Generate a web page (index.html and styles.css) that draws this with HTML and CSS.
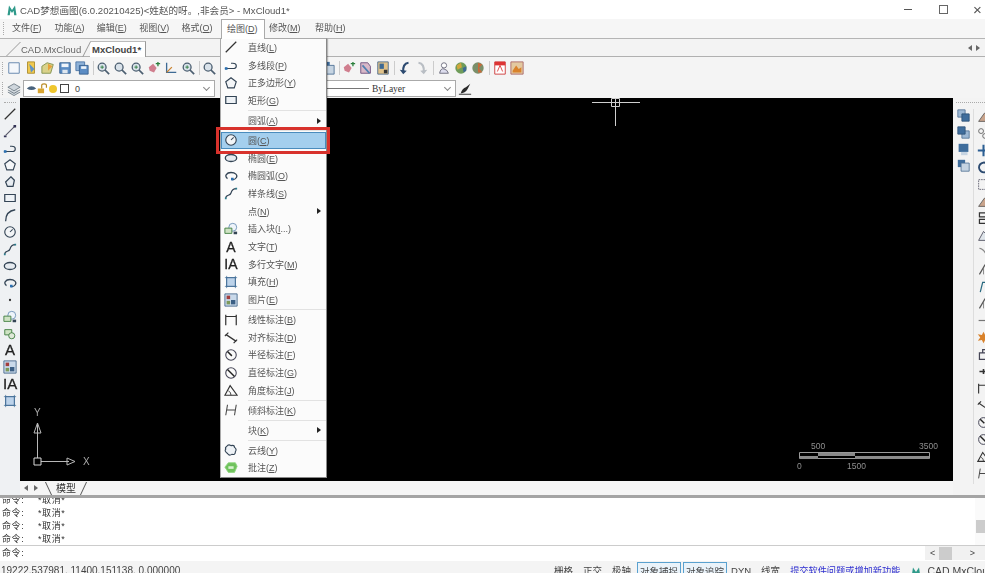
FILE: index.html
```html
<!DOCTYPE html>
<html lang="zh">
<head>
    <meta charset="UTF-8">
    <title>CAD梦想画图</title>
    <link rel="stylesheet" href="styles.css">
</head>
<body>
<svg class="defs" width="0" height="0">
    <symbol id="i-line" viewBox="0 0 16 16"><path d="M2 14L14 2" stroke="#333" stroke-width="1.5"/></symbol>
    <symbol id="i-xline" viewBox="0 0 16 16"><path d="M3 13L13 3" stroke="#556" stroke-width="1.2"/><path d="M1 13h3v2H1zM12 1h3v3h-3z" fill="#335"/></symbol>
    <symbol id="i-pline" viewBox="0 0 16 16"><path d="M1 12h9q4 0 4-3t-4-3H8" fill="none" stroke="#345" stroke-width="1.4"/><path d="M1 10.5h3v3H1z" fill="#2a6fb0"/></symbol>
    <symbol id="i-polygon" viewBox="0 0 16 16"><path d="M8 2l6 4.500-2.300 7H4.300L2 6.500z" fill="#f4f6f8" stroke="#345" stroke-width="1.3"/></symbol>
    <symbol id="i-poly2" viewBox="0 0 16 16"><path d="M9 2l4 4-1.500 7H5L3 8z" fill="#e8edf2" stroke="#345" stroke-width="1.4"/></symbol>
    <symbol id="i-rect" viewBox="0 0 16 16"><path d="M2 4h12v8H2z" fill="#eef2f6" stroke="#345" stroke-width="1.4"/></symbol>
    <symbol id="i-arc" viewBox="0 0 16 16"><path d="M3 15C3 8 7 3 14 2" fill="none" stroke="#345" stroke-width="1.5"/></symbol>
    <symbol id="i-circle" viewBox="0 0 16 16"><circle cx="8" cy="8" r="6" fill="#f3f5f7" stroke="#345" stroke-width="1.3"/><path d="M8 8l3-3" stroke="#345" stroke-width="1.2"/></symbol>
    <symbol id="i-spline" viewBox="0 0 16 16"><path d="M2 14C2 9 7 12 8 8s4-5 6-5" fill="none" stroke="#345" stroke-width="1.3"/><path d="M1 13h2v2H1zM13 2h2v2h-2z" fill="#2a7f8f"/></symbol>
    <symbol id="i-ellipse" viewBox="0 0 16 16"><ellipse cx="8" cy="8" rx="6.5" ry="4" fill="#e6ebf0" stroke="#345" stroke-width="1.5"/></symbol>
    <symbol id="i-elliparc" viewBox="0 0 16 16"><path d="M4 11C0 8 3 4 8 4s8 3 6 6-4 2-5 2" fill="none" stroke="#345" stroke-width="1.5"/><path d="M8 10h3v3H8z" fill="#2a6fb0"/></symbol>
    <symbol id="i-point" viewBox="0 0 16 16"><circle cx="8" cy="8" r="1.3" fill="#333"/></symbol>
    <symbol id="i-insert" viewBox="0 0 16 16"><circle cx="10" cy="6" r="4.5" fill="#eef4fa" stroke="#6a8fb5"/><path d="M1 7h8v6H1z" fill="#cfe3c4" stroke="#3c7a3c"/><path d="M11 11h4v3h-4z" fill="#345"/></symbol>
    <symbol id="i-block" viewBox="0 0 16 16"><path d="M2 3h8v6H2z" fill="#cfe3c4" stroke="#3c7a3c"/><circle cx="10" cy="10" r="3.5" fill="#dfe8d8" stroke="#3c7a3c"/></symbol>
    <symbol id="i-hatch" viewBox="0 0 16 16"><path d="M3 3h10v10H3z" fill="#bcd3ea" stroke="#3d6a94"/><path d="M1 3h14M1 13h14M3 1v14M13 1v14" stroke="#3d6a94" stroke-width=".8"/></symbol>
    <symbol id="i-image" viewBox="0 0 16 16"><path d="M1 1h14v14H1z" fill="#c9d9ea" stroke="#46688c"/><path d="M3 3h4v4H3z" fill="#a33d3d"/><path d="M8 8h5v5H8z" fill="#3b5f85"/><path d="M3 9h4v4H3z" fill="#7d9a5a"/></symbol>
    <symbol id="i-dimlin" viewBox="0 0 16 16"><path d="M2 2v12M14 2v12M2 4h12" fill="none" stroke="#333" stroke-width="1.4"/></symbol>
    <symbol id="i-dimali" viewBox="0 0 16 16"><path d="M2 5l12 8" stroke="#333" stroke-width="1.4"/><path d="M1 7l4-4M11 15l4-4" stroke="#333" stroke-width="1.4"/></symbol>
    <symbol id="i-dimrad" viewBox="0 0 16 16"><circle cx="8" cy="8" r="6" fill="none" stroke="#445" stroke-width="1.2"/><path d="M4 4l5 5" stroke="#222" stroke-width="1.7"/></symbol>
    <symbol id="i-dimdia" viewBox="0 0 16 16"><circle cx="8" cy="8" r="6" fill="none" stroke="#445" stroke-width="1.2"/><path d="M4 4l8 8" stroke="#222" stroke-width="1.7"/></symbol>
    <symbol id="i-dimang" viewBox="0 0 16 16"><path d="M1 14h14L7 3z" fill="none" stroke="#333" stroke-width="1.3"/><path d="M5 9q3 1 3 5" fill="none" stroke="#333"/></symbol>
    <symbol id="i-dimobl" viewBox="0 0 16 16"><path d="M4 2L2 14M14 2l-2 12M3 8h10" fill="none" stroke="#444" stroke-width="1.2"/></symbol>
    <symbol id="i-cloud" viewBox="0 0 16 16"><path d="M3 4q2-3 5-1 4-1 4 2 3 2 1 5 0 4-4 3-3 2-5-1Q0 9 2 7q-1-2 1-3z" fill="#eef2f6" stroke="#345" stroke-width="1.3"/></symbol>
    <symbol id="i-note" viewBox="0 0 16 16"><path d="M5 2h8l2 4-3 7H5L1 7z" fill="#6fc25c" stroke="#8fd67f"/><path d="M5 6h6v3H5z" fill="#d7f0cf"/></symbol>
    <symbol id="i-logo" viewBox="0 0 16 16"><path d="M2 15L4 2l4 6 4-6 2 13h-3l-1-6-2 3-2-3-1 6z" fill="#2f9a8a"/></symbol>
    <symbol id="t-new" viewBox="0 0 16 16"><path d="M2 2h12v12H2z" fill="#f4f7fb" stroke="#5a7fa8"/></symbol>
    <symbol id="t-open" viewBox="0 0 16 16"><path d="M4 1h8v13H4z" fill="#f0c94f" stroke="#a98a2c"/><path d="M6 3l6 6-4 4z" fill="#5f93c6"/></symbol>
    <symbol id="t-open2" viewBox="0 0 16 16"><path d="M1 14V6l6-4 7 2-3 10z" fill="#d9d28a" stroke="#7f8f4a"/><path d="M8 3l5 3-5 5z" fill="#e8a13a"/></symbol>
    <symbol id="t-save" viewBox="0 0 16 16"><path d="M2 2h12v12H2z" fill="#5b8cc4" stroke="#36608f"/><path d="M4 3h8v4H4z" fill="#eef4fa"/><path d="M5 10h6v4H5z" fill="#dfe7ef"/></symbol>
    <symbol id="t-saveas" viewBox="0 0 16 16"><path d="M1 1h10v10H1z" fill="#8fb2d8" stroke="#4a74a3"/><path d="M5 5h10v10H5z" fill="#5b8cc4" stroke="#36608f"/><path d="M7 6h6v3H7z" fill="#eef4fa"/></symbol>
    <symbol id="t-zoom" viewBox="0 0 16 16"><circle cx="7" cy="7" r="4.5" fill="#d9e2ea" stroke="#4b5e70" stroke-width="1.5"/><path d="M10 10l5 5" stroke="#4b5e70" stroke-width="2"/></symbol>
    <symbol id="t-zoomp" viewBox="0 0 16 16"><circle cx="7" cy="7" r="4.5" fill="#d9e2ea" stroke="#4b5e70" stroke-width="1.5"/><path d="M10 10l5 5" stroke="#4b5e70" stroke-width="2"/><path d="M5 7h4M7 5v4" stroke="#2a7a3c"/></symbol>
    <symbol id="t-ucs" viewBox="0 0 16 16"><path d="M2 7l5-4 4 5-3 5-5-2z" fill="#d07e8e"/><path d="M10 3h5M12.5 1v5" stroke="#2a7f3c" stroke-width="1.5"/></symbol>
    <symbol id="t-axis" viewBox="0 0 16 16"><path d="M3 2v11h11" fill="none" stroke="#3d6a94" stroke-width="1.5"/><path d="M3 13l6-6" stroke="#c9812c" stroke-width="1.5"/></symbol>
    <symbol id="t-sel" viewBox="0 0 16 16"><path d="M2 2h8l3 4v8H2z" fill="#d8b8c8" stroke="#6a4d7a"/><path d="M4 5l8 9" stroke="#4e7fb0" stroke-width="2"/></symbol>
    <symbol id="t-props" viewBox="0 0 16 16"><path d="M2 1h12v14H2z" fill="#e0c28a" stroke="#4a6a8a"/><path d="M4 3h5v6H4z" fill="#3d6a94"/><path d="M9 10h4v4H9z" fill="#333"/></symbol>
    <symbol id="t-undo" viewBox="0 0 16 16"><path d="M12 2Q5 3 6 13" fill="none" stroke="#2c4a70" stroke-width="2.5"/><path d="M2 10l4 5 4-4z" fill="#2c4a70"/></symbol>
    <symbol id="t-redo" viewBox="0 0 16 16"><path d="M4 2q7 1 6 11" fill="none" stroke="#b9bec4" stroke-width="2.5"/><path d="M14 10l-4 5-4-4z" fill="#b9bec4"/></symbol>
    <symbol id="t-user" viewBox="0 0 16 16"><circle cx="8" cy="5" r="3" fill="#fff" stroke="#667"/><path d="M3 14q1-6 5-5t5 5z" fill="#dde" stroke="#667"/></symbol>
    <symbol id="t-globe" viewBox="0 0 16 16"><circle cx="8" cy="8" r="6.5" fill="#6f9c5a"/><path d="M3 5l5-3 1 5-5 3z" fill="#d0a63c"/><path d="M10 8l4-2v5l-3 2z" fill="#3d6a94"/></symbol>
    <symbol id="t-globe2" viewBox="0 0 16 16"><circle cx="8" cy="8" r="6.5" fill="#7a8f6a"/><path d="M8 2l5 2-4 4 4 5H8z" fill="#c86a3a"/></symbol>
    <symbol id="t-pdf" viewBox="0 0 16 16"><path d="M2 1h12v14H2z" fill="#fff" stroke="#c33"/><path d="M2 1h12v4H2z" fill="#d33"/><path d="M5 12l3-7 3 7" fill="none" stroke="#d33"/></symbol>
    <symbol id="t-photo" viewBox="0 0 16 16"><path d="M1 1h14v14H1z" fill="#e3c9a0" stroke="#a66"/><path d="M3 11l4-6 3 4 3-2v6H3z" fill="#d9822b"/></symbol>
    <symbol id="r-stack1" viewBox="0 0 16 16"><path d="M1 1h9v9H1z" fill="#9db8d4" stroke="#4d6f94"/><path d="M6 6h9v9H6z" fill="#3f6d9c" stroke="#2b4f75"/></symbol>
    <symbol id="r-stack2" viewBox="0 0 16 16"><path d="M6 6h9v9H6z" fill="#9db8d4" stroke="#4d6f94"/><path d="M1 1h9v9H1z" fill="#3f6d9c" stroke="#2b4f75"/></symbol>
    <symbol id="r-stack3" viewBox="0 0 16 16"><path d="M2 1h12v10H2z" fill="#3f6d9c"/><path d="M5 11h8v4H5z" fill="#c6d4e2"/></symbol>
    <symbol id="r-stack4" viewBox="0 0 16 16"><path d="M1 1h9v9H1z" fill="#3f6d9c"/><path d="M5 5h10v10H5z" fill="#c6d4e2" stroke="#4d6f94"/></symbol>
    <symbol id="r-erase" viewBox="0 0 16 16"><path d="M2 14L9 4h5v10z" fill="#c9a48c" stroke="#555"/></symbol>
    <symbol id="r-copy" viewBox="0 0 16 16"><circle cx="5" cy="5" r="3" fill="none" stroke="#555"/><circle cx="10" cy="11" r="3" fill="none" stroke="#555"/></symbol>
    <symbol id="r-move" viewBox="0 0 16 16"><path d="M8 1v14M1 8h14" stroke="#2c5f94" stroke-width="2.5"/></symbol>
    <symbol id="r-rotate" viewBox="0 0 16 16"><path d="M12 3a6 6 0 1 0 1 9" fill="none" stroke="#2c4a70" stroke-width="2.5"/></symbol>
    <symbol id="r-scale" viewBox="0 0 16 16"><path d="M2 2h12v12H2z" fill="none" stroke="#556" stroke-dasharray="2 1"/></symbol>
    <symbol id="r-stretch" viewBox="0 0 16 16"><path d="M2 14L8 3l6 6-2 5z" fill="#dfe5ea" stroke="#445"/></symbol>
    <symbol id="r-array" viewBox="0 0 16 16"><path d="M3 1h10v5H3zM3 9h10v5H3z" fill="none" stroke="#333" stroke-width="1.5"/></symbol>
    <symbol id="r-trim" viewBox="0 0 16 16"><path d="M3 14L10 2" stroke="#555" stroke-width="1.5"/><path d="M8 14V6" stroke="#777"/></symbol>
    <symbol id="r-extend" viewBox="0 0 16 16"><path d="M3 3q5 0 9 9" fill="none" stroke="#888" stroke-width="1.5"/></symbol>
    <symbol id="r-break" viewBox="0 0 16 16"><path d="M4 15L7 3h7" fill="none" stroke="#2a6a80" stroke-width="1.5"/></symbol>
    <symbol id="r-dash" viewBox="0 0 16 16"><path d="M2 8h12" stroke="#777" stroke-width="1.5"/></symbol>
    <symbol id="r-expl" viewBox="0 0 16 16"><path d="M8 1l2 4 5-1-3 4 3 4-5-1-2 4-2-4-5 1 3-4-3-4 5 1z" fill="#d9822b"/></symbol>
    <symbol id="r-join" viewBox="0 0 16 16"><path d="M3 6h9v8H3zM7 6V2h7" fill="none" stroke="#445" stroke-width="1.5"/></symbol>
    <symbol id="r-cross" viewBox="0 0 16 16"><path d="M3 8h10M8 5v6" stroke="#333" stroke-width="2"/></symbol>
</svg>

<div class="app">
    <div class="titlebar">
        <svg class="title-logo"><use href="#i-logo"/></svg>
        <span class="title-text">CAD梦想画图(6.0.20210425)&lt;姓赵的呀。,非会员&gt; - MxCloud1*</span>
        <div class="win-btns">
            <span class="win-min"></span>
            <span class="win-max"></span>
            <span class="win-close">×</span>
        </div>
    </div>

    <div class="menubar">
        <span class="grip-v"></span>
        <a class="top-item">文件(<u>F</u>)</a>
        <a class="top-item">功能(<u>A</u>)</a>
        <a class="top-item">编辑(<u>E</u>)</a>
        <a class="top-item">视图(<u>V</u>)</a>
        <a class="top-item">格式(<u>O</u>)</a>
        <div class="top-open">
            <a class="top-item open">绘图(<u>D</u>)</a>
            <div class="dropdown">
                <div class="mi"><svg><use href="#i-line"/></svg><span>直线(<u>L</u>)</span></div>
                <div class="mi"><svg><use href="#i-pline"/></svg><span>多线段(<u>P</u>)</span></div>
                <div class="mi"><svg><use href="#i-polygon"/></svg><span>正多边形(<u>Y</u>)</span></div>
                <div class="mi"><svg><use href="#i-rect"/></svg><span>矩形(<u>G</u>)</span></div>
                <div class="msep"></div>
                <div class="mi sub"><i></i><span>圆弧(<u>A</u>)</span></div>
                <div class="msep"></div>
                <div class="mi active"><svg><use href="#i-circle"/></svg><span>圆(<u>C</u>)</span></div>
                <div class="mi"><svg><use href="#i-ellipse"/></svg><span>椭圆(<u>E</u>)</span></div>
                <div class="mi"><svg><use href="#i-elliparc"/></svg><span>椭圆弧(<u>O</u>)</span></div>
                <div class="mi"><svg><use href="#i-spline"/></svg><span>样条线(<u>S</u>)</span></div>
                <div class="mi sub"><i></i><span>点(<u>N</u>)</span></div>
                <div class="mi"><svg><use href="#i-insert"/></svg><span>插入块(<u>I</u>...)</span></div>
                <div class="mi"><b class="glyph">A</b><span>文字(<u>T</u>)</span></div>
                <div class="mi"><b class="glyph">IA</b><span>多行文字(<u>M</u>)</span></div>
                <div class="mi"><svg><use href="#i-hatch"/></svg><span>填充(<u>H</u>)</span></div>
                <div class="mi"><svg><use href="#i-image"/></svg><span>图片(<u>E</u>)</span></div>
                <div class="msep"></div>
                <div class="mi"><svg><use href="#i-dimlin"/></svg><span>线性标注(<u>B</u>)</span></div>
                <div class="mi"><svg><use href="#i-dimali"/></svg><span>对齐标注(<u>D</u>)</span></div>
                <div class="mi"><svg><use href="#i-dimrad"/></svg><span>半径标注(<u>F</u>)</span></div>
                <div class="mi"><svg><use href="#i-dimdia"/></svg><span>直径标注(<u>G</u>)</span></div>
                <div class="mi"><svg><use href="#i-dimang"/></svg><span>角度标注(<u>J</u>)</span></div>
                <div class="msep"></div>
                <div class="mi"><svg><use href="#i-dimobl"/></svg><span>倾斜标注(<u>K</u>)</span></div>
                <div class="msep"></div>
                <div class="mi sub"><i></i><span>块(<u>K</u>)</span></div>
                <div class="msep"></div>
                <div class="mi"><svg><use href="#i-cloud"/></svg><span>云线(<u>Y</u>)</span></div>
                <div class="mi"><svg><use href="#i-note"/></svg><span>批注(<u>Z</u>)</span></div>
            </div>
        </div>
        <a class="top-item wide">修改(<u>M</u>)</a>
        <a class="top-item">帮助(<u>H</u>)</a>
    </div>

    <div class="filetabs">
        <div class="filetab">CAD.MxCloud</div>
        <div class="filetab current">MxCloud1*</div>
        <div class="tab-arrows"><span class="arr-l"></span><span class="arr-r"></span></div>
    </div>

    <div class="toolbar tb-main">
        <span class="grip-v"></span>
        <svg><use href="#t-new"/></svg>
        <svg><use href="#t-open"/></svg>
        <svg><use href="#t-open2"/></svg>
        <svg><use href="#t-save"/></svg>
        <svg><use href="#t-saveas"/></svg>
        <span class="tsep"></span>
        <svg><use href="#t-zoomp"/></svg>
        <svg><use href="#t-zoom"/></svg>
        <svg><use href="#t-zoomp"/></svg>
        <svg><use href="#t-ucs"/></svg>
        <svg><use href="#t-axis"/></svg>
        <svg><use href="#t-zoomp"/></svg>
        <span class="tsep"></span>
        <svg><use href="#t-zoom"/></svg>
        <span class="tb-gap"></span>
        <svg><use href="#r-stack4"/></svg>
        <span class="tsep"></span>
        <svg><use href="#t-ucs"/></svg>
        <svg><use href="#t-sel"/></svg>
        <svg><use href="#t-props"/></svg>
        <span class="tsep wide"></span>
        <svg><use href="#t-undo"/></svg>
        <svg><use href="#t-redo"/></svg>
        <span class="tsep wide"></span>
        <svg><use href="#t-user"/></svg>
        <svg><use href="#t-globe"/></svg>
        <svg><use href="#t-globe2"/></svg>
        <span class="tsep wide"></span>
        <svg><use href="#t-pdf"/></svg>
        <svg><use href="#t-photo"/></svg>
    </div>

    <div class="toolbar tb-layer">
        <span class="grip-v"></span>
        <svg class="layers" viewBox="0 0 16 16"><path d="M8 2l7 4-7 4-7-4zM1 9l7 4 7-4M1 11.5l7 4 7-4" fill="#cfd6dc" stroke="#6e7a85"/></svg>
        <div class="combo layer-combo">
            <svg class="eye" viewBox="0 0 14 14"><path d="M1 7q6-6 12 0-6 4-12 0z" fill="#48627c"/></svg>
            <svg class="lock" viewBox="0 0 14 14"><path d="M1 7h8v6H1z" fill="#d9a531"/><path d="M6 7V3q0-2 3-2t3 2v3" fill="none" stroke="#b98b24" stroke-width="1.5"/></svg>
            <span class="sun"></span>
            <span class="swatch"></span>
            <span class="layer-name">0</span>
            <span class="chev"></span>
        </div>
        <span class="tb-gap-2"></span>
        <div class="combo lineweight">
            <span class="lw-line"></span>
            <span class="lw-name">ByLayer</span>
            <span class="chev"></span>
        </div>
        <svg class="brush" viewBox="0 0 16 16"><path d="M1 14h14" stroke="#222"/><path d="M3 13q2-6 6-7l5-4-3 6q-3 5-8 5z" fill="#2b2b2b"/></svg>
    </div>

    <div class="workspace">
        <div class="left-bar">
            <span class="grip-h"></span>
            <svg><use href="#i-line"/></svg>
            <svg><use href="#i-xline"/></svg>
            <svg><use href="#i-pline"/></svg>
            <svg><use href="#i-polygon"/></svg>
            <svg><use href="#i-poly2"/></svg>
            <svg><use href="#i-rect"/></svg>
            <svg><use href="#i-arc"/></svg>
            <svg><use href="#i-circle"/></svg>
            <svg><use href="#i-spline"/></svg>
            <svg><use href="#i-ellipse"/></svg>
            <svg><use href="#i-elliparc"/></svg>
            <svg><use href="#i-point"/></svg>
            <svg><use href="#i-insert"/></svg>
            <svg><use href="#i-block"/></svg>
            <b class="glyph">A</b>
            <svg><use href="#i-image"/></svg>
            <b class="glyph">IA</b>
            <svg><use href="#i-hatch"/></svg>
        </div>

        <div class="center">
            <div class="canvas">
                <svg class="cross" viewBox="0 0 50 28">
                    <path d="M1 4.5h48M24.5 0v28" stroke="#cfcfcf"/>
                    <path d="M20.5 .5h8v8h-8z" fill="none" stroke="#cfcfcf"/>
                </svg>
                <svg class="ucs" viewBox="0 0 90 70">
                    <text x="11" y="10" class="ucs-label">Y</text>
                    <path d="M14.5 17v35M18 55.500h28" stroke="#b8b8b8"/>
                    <path d="M14.500 17l-3.500 10h7z" fill="none" stroke="#b8b8b8"/>
                    <path d="M52 55.500l-8-3.500v7z" fill="none" stroke="#b8b8b8"/>
                    <path d="M11 52h7v7h-7z" fill="none" stroke="#d8d8d8"/>
                    <text x="60" y="59" class="ucs-label">X</text>
                </svg>
                <svg class="scalebar" viewBox="0 0 145 34">
                    <text x="15" y="8">500</text>
                    <text x="123" y="8">3500</text>
                    <path d="M3.5 11.500h130v6H3.500z" fill="none" stroke="#9a9a9a"/>
                    <path d="M4 15h18v3H4zM22 12h37v3H22zM59 15h74v3H59z" fill="#8a8a8a"/>
                    <text x="1" y="28">0</text>
                    <text x="51" y="28">1500</text>
                </svg>
            </div>
            <div class="sheetbar">
                <span class="arr-l"></span><span class="arr-r"></span>
                <div class="sheet">模型</div>
            </div>
        </div>

        <div class="right-bars">
            <span class="grip-h"></span>
            <div class="right-cols">
                <div class="right-col first">
                    <svg><use href="#r-stack1"/></svg>
                    <svg><use href="#r-stack2"/></svg>
                    <svg><use href="#r-stack3"/></svg>
                    <svg><use href="#r-stack4"/></svg>
                </div>
                <div class="right-col second">
                    <svg><use href="#r-erase"/></svg>
                    <svg><use href="#r-copy"/></svg>
                    <svg><use href="#r-move"/></svg>
                    <svg><use href="#r-rotate"/></svg>
                    <svg><use href="#r-scale"/></svg>
                    <svg><use href="#r-erase"/></svg>
                    <svg><use href="#r-array"/></svg>
                    <svg><use href="#r-stretch"/></svg>
                    <svg><use href="#r-extend"/></svg>
                    <svg><use href="#r-trim"/></svg>
                    <svg><use href="#r-break"/></svg>
                    <svg><use href="#r-trim"/></svg>
                    <svg><use href="#r-dash"/></svg>
                    <svg><use href="#r-expl"/></svg>
                    <svg><use href="#r-join"/></svg>
                    <svg><use href="#r-cross"/></svg>
                    <svg><use href="#i-dimlin"/></svg>
                    <svg><use href="#i-dimali"/></svg>
                    <svg><use href="#i-dimrad"/></svg>
                    <svg><use href="#i-dimdia"/></svg>
                    <svg><use href="#i-dimang"/></svg>
                    <svg><use href="#i-dimobl"/></svg>
                </div>
            </div>
        </div>
    </div>

    <div class="command">
        <div class="cmd-history">
            <div class="cmd-lines">
                <div class="cmd-row"><span>命令:</span><span>*取消*</span></div>
                <div class="cmd-row"><span>命令:</span><span>*取消*</span></div>
                <div class="cmd-row"><span>命令:</span><span>*取消*</span></div>
                <div class="cmd-row"><span>命令:</span><span>*取消*</span></div>
            </div>
            <div class="vscroll"><span class="vthumb"></span></div>
        </div>
        <div class="cmd-input">
            <span>命令:</span>
            <div class="hscroll"><span>&lt;</span><i></i><span>&gt;</span></div>
        </div>
    </div>

    <div class="statusbar">
        <span class="coords">19222.537981, 11400.151138, 0.000000</span>
        <div class="status-right">
            <span class="st">栅格</span>
            <span class="st">正交</span>
            <span class="st last">极轴</span>
            <span class="st on">对象捕捉</span>
            <span class="st on">对象追踪</span>
            <span class="st">DYN</span>
            <span class="st">线宽</span>
            <a class="st link">提交软件问题或增加新功能</a>
            <svg class="st-logo"><use href="#i-logo"/></svg>
            <span class="st brand">CAD MxCloud</span>
        </div>
    </div>
</div>
</body>
</html>
```

FILE: styles.css
```css
html, body {
    margin: 0;
    padding: 0;
    height: 100%;
    overflow: hidden;
}
body {
    font-family: "Liberation Sans", "Noto Sans CJK SC", sans-serif;
    font-size: 9px;
    color: #555;
    background-color: #f5f5f5;
}
.defs {
    position: absolute;
}
.app {
    width: 985px;
    height: 573px;
    display: flex;
    flex-direction: column;
    overflow: hidden;
    filter: blur(0.35px);
}
u {
    text-decoration: underline;
}

/* title */
.titlebar {
    height: 19px;
    flex: none;
    display: flex;
    align-items: center;
    background: #fff;
    padding-left: 6px;
}
.title-logo {
    width: 12px;
    height: 12px;
    margin-right: 2px;
}
.title-text {
    font-size: 9.6px;
    color: #555;
}
.win-btns {
    margin-left: auto;
    display: flex;
    align-items: center;
    height: 19px;
}
.win-min {
    width: 8px;
    height: 1px;
    background: #555;
    margin-right: 27px;
}
.win-max {
    width: 7px;
    height: 7px;
    border: 1px solid #666;
    margin-right: 25px;
}
.win-close {
    font-size: 15px;
    color: #555;
    width: 12px;
}

/* menu */
.menubar {
    height: 19px;
    flex: none;
    display: flex;
    align-items: center;
    background: #f6f6f6;
    border-bottom: 1px solid #b5b5b5;
    padding-left: 3px;
}
.grip-v {
    width: 1px;
    height: 13px;
    border-left: 1px dotted #aaa;
    margin-right: 7px;
    flex: none;
}
.top-item {
    display: block;
    width: 42.4px;
    flex: none;
    color: #555;
    line-height: 19px;
    white-space: nowrap;
}
.top-item.wide {
    width: 46px;
}
.top-open {
    position: relative;
    width: 48px;
    flex: none;
    margin-left: -3px;
}
.top-item.open {
    box-sizing: border-box;
    width: 44px;
    height: 20px;
    padding-left: 5px;
    background: #fff;
    border: 1px solid #aaa;
    border-bottom: none;
    line-height: 18px;
    position: relative;
    z-index: 3;
}
.dropdown {
    position: absolute;
    left: -1px;
    top: 19px;
    box-sizing: border-box;
    width: 107px;
    height: 440px;
    background: #fbfbfb;
    border: 1px solid #aaa;
    border-right-color: #888;
    border-bottom-color: #888;
    box-shadow: 1px 1px 1px rgba(0, 0, 0, 0.25);
    z-index: 2;
}
.mi {
    position: relative;
    height: 17.7px;
    display: flex;
    align-items: center;
    padding-left: 3px;
    font-size: 9px;
}
.mi svg,
.mi i,
.mi .glyph {
    width: 14px;
    height: 14px;
    flex: none;
    margin-right: 10px;
}
.mi .glyph {
    font-size: 14px;
    line-height: 14px;
    font-weight: normal;
    text-align: center;
    color: #222;
    -webkit-text-stroke: 0.3px #222;
}
.mi.sub::after {
    content: "";
    position: absolute;
    right: 5px;
    top: 6px;
    border-left: 4px solid #222;
    border-top: 3px solid transparent;
    border-bottom: 3px solid transparent;
}
.msep {
    height: 1px;
    background: #e2e2e2;
    margin: 1px 0 0.3px 27px;
}
.mi.active {
    background: #a4cfee;
    box-shadow: inset 0 0 0 1px #4a8cbd;
}
.mi.active::after {
    content: "";
    position: absolute;
    left: -5px;
    right: -4px;
    top: -5px;
    bottom: -5px;
    border: 3px solid #d8322c;
}

/* file tabs */
.filetabs {
    height: 18px;
    flex: none;
    display: flex;
    align-items: flex-end;
    background: #f3f3f3;
    border-bottom: 1px solid #b0b0b0;
    box-sizing: border-box;
    padding-left: 21px;
    position: relative;
}
.filetab {
    position: relative;
    width: 69px;
    height: 14px;
    line-height: 15px;
    font-size: 9.5px;
    color: #666;
}
.filetab::before {
    content: "";
    position: absolute;
    left: -8px;
    bottom: 0;
    width: 16px;
    height: 14px;
    border-left: 1px solid #999;
    transform: skewX(-45deg);
}
.filetab.current {
    width: 56px;
    height: 16px;
    line-height: 16px;
    margin-bottom: -1px;
    font-weight: bold;
    color: #444;
    background: #fff;
    border-top: 1px solid #bbb;
    border-right: 1px solid #999;
    box-sizing: border-box;
    padding-left: 2px;
}
.filetab.current::before {
    left: -4px;
    height: 15px;
    transform: skewX(-27deg);
}
.tab-arrows {
    margin-left: auto;
    display: flex;
    gap: 4px;
    align-self: center;
    padding-right: 5px;
}
.arr-l,
.arr-r {
    display: inline-block;
    border-top: 3px solid transparent;
    border-bottom: 3px solid transparent;
}
.arr-l {
    border-right: 4px solid #666;
}
.arr-r {
    border-left: 4px solid #666;
}

/* toolbars */
.toolbar {
    flex: none;
    display: flex;
    align-items: center;
    background: #f4f4f4;
    padding-left: 2px;
}
.tb-main {
    height: 22px;
}
.tb-main svg {
    width: 14px;
    height: 14px;
    flex: none;
    margin-right: 3px;
}
.tb-main .grip-v {
    margin-right: 3px;
}
.tsep {
    width: 1px;
    height: 14px;
    background: #ccc;
    margin: 0 2px 0 1px;
    flex: none;
}
.tsep.wide {
    margin-right: 3px;
}
.tb-gap {
    width: 102px;
    flex: none;
}
.tb-layer {
    height: 19px;
}
.tb-layer .grip-v {
    margin-right: 3px;
}
.layers {
    width: 14px;
    height: 14px;
    margin-right: 2px;
    flex: none;
}
.combo {
    box-sizing: border-box;
    height: 17px;
    display: flex;
    align-items: center;
    background: #fff;
    border: 1px solid #aaa;
    position: relative;
    flex: none;
}
.layer-combo {
    width: 192px;
    padding-left: 2px;
}
.eye,
.lock {
    width: 11px;
    height: 11px;
    flex: none;
}
.sun {
    width: 8px;
    height: 8px;
    border-radius: 50%;
    background: #efc62d;
    margin-left: 1px;
    flex: none;
}
.swatch {
    width: 7px;
    height: 7px;
    border: 1px solid #444;
    background: #fff;
    margin-left: 3px;
    flex: none;
}
.layer-name {
    margin-left: 6px;
    color: #444;
}
.chev {
    position: absolute;
    right: 5px;
    top: 4px;
    width: 4px;
    height: 4px;
    border-right: 1px solid #888;
    border-bottom: 1px solid #888;
    transform: rotate(45deg);
}
.tb-gap-2 {
    width: 108px;
    flex: none;
}
.lineweight {
    width: 133px;
}
.lw-line {
    width: 45px;
    height: 1px;
    background: #777;
    flex: none;
}
.lw-name {
    font-family: "Liberation Serif", serif;
    font-size: 9.5px;
    color: #333;
    margin-left: 3px;
}
.brush {
    width: 14px;
    height: 14px;
    margin-left: 2px;
    flex: none;
}

/* workspace */
.workspace {
    height: 397px;
    flex: none;
    display: flex;
    background: #f3f3f3;
}
.left-bar {
    width: 20px;
    flex: none;
    box-sizing: border-box;
    padding-top: 10px;
    display: flex;
    flex-direction: column;
    align-items: center;
    background: #eff1f3;
}
.left-bar svg,
.left-bar .glyph {
    width: 14px;
    height: 14px;
    flex: none;
    margin-bottom: 2.9px;
}
.left-bar .glyph {
    font-size: 15px;
    line-height: 14px;
    font-weight: normal;
    text-align: center;
    color: #222;
    -webkit-text-stroke: 0.3px #222;
}
.grip-h {
    height: 1px;
    border-top: 1px dotted #aaa;
    flex: none;
}
.left-bar .grip-h {
    width: 12px;
    margin: -6px 0 3px;
}
.center {
    flex: 1;
    display: flex;
    flex-direction: column;
    min-width: 0;
}
.canvas {
    position: relative;
    height: 383px;
    flex: none;
    background: #000;
    overflow: hidden;
}
.cross {
    position: absolute;
    left: 571px;
    top: 0;
    width: 50px;
    height: 28px;
}
.ucs {
    position: absolute;
    left: 3px;
    top: 308px;
    width: 90px;
    height: 70px;
}
.ucs-label {
    font-size: 10px;
    fill: #aaa;
}
.scalebar {
    position: absolute;
    left: 776px;
    top: 343px;
    width: 145px;
    height: 34px;
    font-size: 8.5px;
    fill: #8f8f8f;
}
.sheetbar {
    height: 14px;
    flex: none;
    display: flex;
    align-items: center;
    gap: 6px;
    padding-left: 4px;
    background: #f5f5f5;
}
.sheet {
    position: relative;
    margin-left: 2px;
    padding: 0 10px;
    height: 13px;
    line-height: 13px;
    color: #333;
    font-size: 10px;
}
.sheet::before,
.sheet::after {
    content: "";
    position: absolute;
    top: 0;
    height: 13px;
    border-left: 1px solid #555;
}
.sheet::before {
    left: 2px;
    transform: skewX(25deg);
}
.sheet::after {
    right: 2px;
    transform: skewX(-25deg);
}
.right-bars {
    width: 32px;
    flex: none;
    background: #f3f3f3;
    overflow: hidden;
    padding-top: 4px;
}
.right-bars .grip-h {
    display: block;
    margin-left: 3px;
}
.right-cols {
    display: flex;
    padding-top: 5px;
}
.right-col {
    display: flex;
    flex-direction: column;
    flex: none;
    align-items: center;
}
.right-col.first {
    width: 20px;
}
.right-col.second {
    width: 14px;
    border-left: 1px solid #ddd;
    padding-top: 1px;
    align-items: flex-start;
}
.right-col svg {
    width: 13px;
    height: 13px;
    flex: none;
    margin-bottom: 3.8px;
}
.right-col.second svg {
    margin-left: 3px;
    margin-bottom: 4px;
}

/* command */
.command {
    flex: none;
    background: #fff;
    border-top: 3px solid #a4a4a4;
    box-sizing: border-box;
    height: 66px;
    display: flex;
    flex-direction: column;
    color: #333;
}
.cmd-history {
    height: 48px;
    flex: none;
    display: flex;
    overflow: hidden;
    border-bottom: 1px solid #ccc;
    box-sizing: border-box;
}
.cmd-lines {
    flex: 1;
    padding-left: 2px;
    margin-top: -4px;
}
.cmd-row {
    height: 13px;
    line-height: 13px;
    display: flex;
    letter-spacing: 0.6px;
}
.cmd-row span:first-child {
    width: 36px;
}
.vscroll {
    width: 10px;
    background: #fafafa;
    position: relative;
}
.vthumb {
    position: absolute;
    left: 1px;
    right: 0;
    top: 22px;
    height: 13px;
    background: #ccc;
}
.cmd-input {
    height: 15px;
    line-height: 14px;
    padding-left: 2px;
    display: flex;
    letter-spacing: 0.6px;
}
.hscroll {
    margin-left: auto;
    width: 60px;
    height: 14px;
    background: #f1f1f1;
    display: flex;
    align-items: center;
    color: #444;
    box-sizing: border-box;
    padding: 0 6px 0 5px;
}
.hscroll i {
    width: 13px;
    height: 13px;
    background: #ccc;
    margin: 0 18px 0 3px;
}

/* status */
.statusbar {
    flex: 1;
    display: flex;
    background: #f4f4f4;
    font-size: 10px;
    color: #444;
    padding-left: 1px;
    white-space: nowrap;
    line-height: 20px;
    overflow: hidden;
}
.status-right {
    margin-left: auto;
    display: flex;
    align-items: flex-start;
    width: 431px;
    flex: none;
    font-size: 9.5px;
}
.st {
    display: block;
    flex: none;
    height: 20px;
    margin-right: 10px;
}
.st.last {
    margin-right: 6px;
}
.st.on {
    margin-right: 2px;
    box-sizing: border-box;
    width: 44px;
    border: 1px solid #5aa1cf;
    background: #eaf3fa;
    padding: 0 2px;
    line-height: 18px;
    margin-top: 1px;
}
.st.on + .st:not(.on) {
    margin-left: 2px;
}
.link {
    color: #2c2ccf;
    font-size: 9.2px;
}
.st-logo {
    width: 12px;
    height: 12px;
    flex: none;
    margin-top: 5px;
    margin-right: 5px;
}
.brand {
    margin-right: 0;
    font-size: 10.5px;
}
```
